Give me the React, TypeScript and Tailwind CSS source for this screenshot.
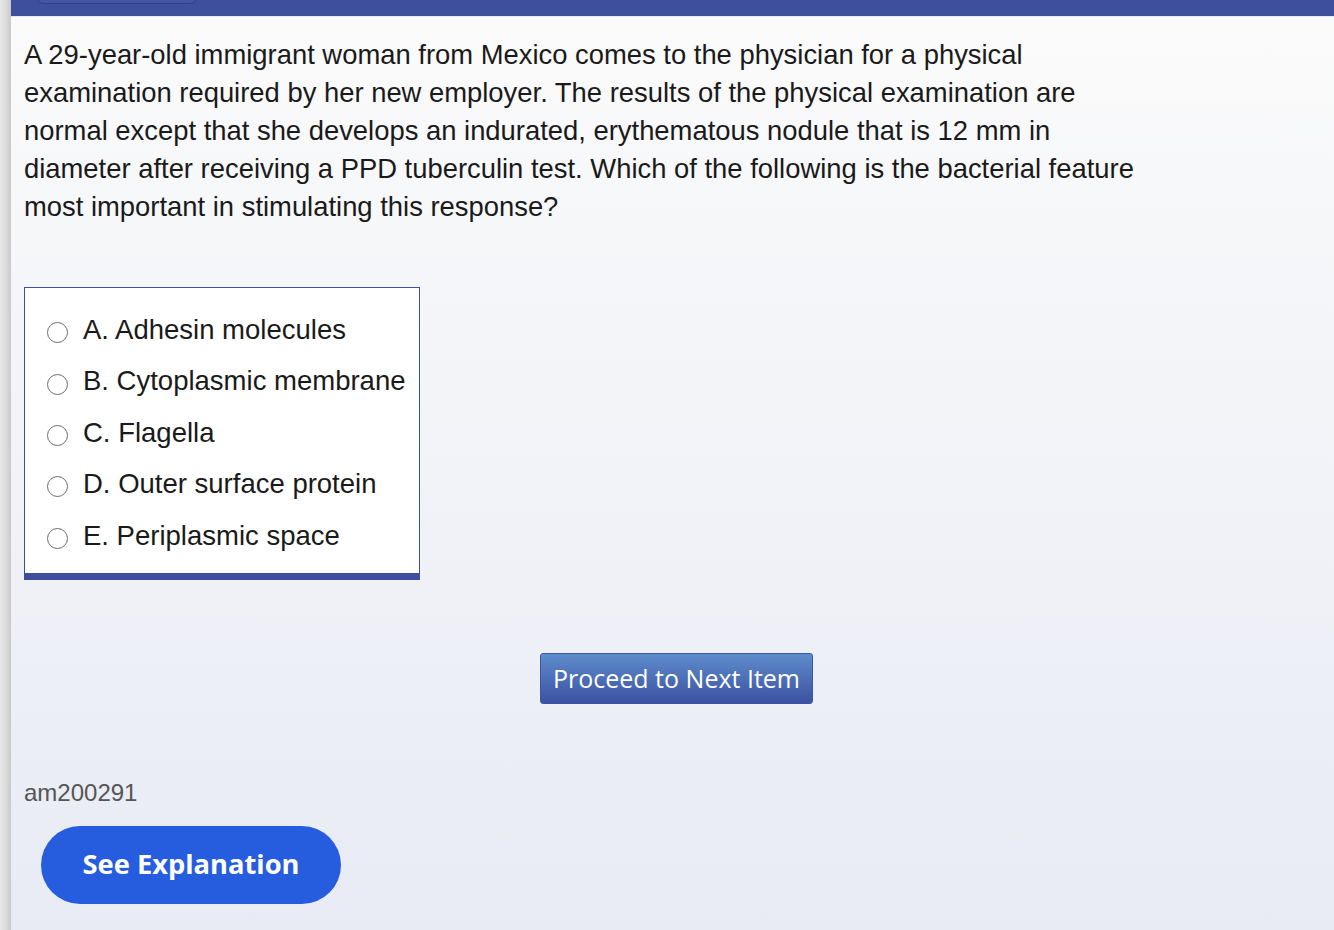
import React from "react";

const options = [
  "A. Adhesin molecules",
  "B. Cytoplasmic membrane",
  "C. Flagella",
  "D. Outer surface protein",
  "E. Periplasmic space",
];

export default function App() {
  return (
    <div className="flex h-[930px] w-[1334px] overflow-hidden bg-white" style={{ fontFamily: '"Liberation Sans", Arial, sans-serif' }}>
      <div className="h-full w-[11px] shrink-0 bg-gradient-to-r from-[#e6e6e6] via-[#dcdcdc] to-[#c9c9c9]" />
      <div className="flex h-full flex-1 flex-col bg-gradient-to-b from-[#fbfbfb] to-[#e8ebf4]">
        <div className="flex h-[17px] shrink-0 items-end justify-between overflow-hidden border-b border-[#e4e7ef] bg-[#3e4f9e] pb-[12px]">
          <div className="ml-[25px] flex h-[34px] w-[162px] shrink-0 items-center justify-center rounded-[8px] border border-[#2f3f88] bg-[#4255a6] text-[22px] text-white">
            Block: 1 of 1
          </div>
          <div className="mr-[-40px] flex h-[30px] items-center text-[22px] text-white" style={{ fontFamily: '"Open Sans", sans-serif' }}>
            Previous
          </div>
        </div>
        <div className="flex flex-1 flex-col pl-[13px]">
          <p className="mt-[19px] w-[1200px] text-[27.4px] leading-[38px] text-[#1a1a1a]">
            A 29-year-old immigrant woman from Mexico comes to the physician for a physical
            <br />
            examination required by her new employer. The results of the physical examination are
            <br />
            normal except that she develops an indurated, erythematous nodule that is 12 mm in
            <br />
            diameter after receiving a PPD tuberculin test. Which of the following is the bacterial feature
            <br />
            most important in stimulating this response?
          </p>
          <div className="mt-[61px] w-[396px] border border-b-[7px] border-[#3e4f9e] bg-white pb-[12px] pt-[16px]">
            {options.map((o) => (
              <div key={o} className="flex h-[51.4px] items-center">
                <div className="ml-[22px] mt-[6px] h-[21px] w-[21px] rounded-full border-[1.5px] border-[#6b6b6b] bg-white" />
                <span className="ml-[15px] text-[27.5px] text-[#1a1a1a]">{o}</span>
              </div>
            ))}
          </div>
          <div className="mt-[73px] flex">
            <button
              className="ml-[516px] flex h-[51px] w-[273px] items-center justify-center rounded-[3px] border border-[#3a55a8] bg-gradient-to-b from-[#5e8ccb] to-[#3d52a2] text-[25px] text-white"
              style={{ fontFamily: '"Open Sans", sans-serif' }}
            >
              Proceed to Next Item
            </button>
          </div>
          <div className="mt-[71px] text-[24px] text-[#555555]">am200291</div>
          <div className="mt-[15px] pl-[17px]">
            <button
              className="flex h-[78px] w-[300px] items-center justify-center rounded-full bg-[#265ddf] text-[27.3px] font-bold text-white"
              style={{ fontFamily: '"Open Sans", sans-serif' }}
            >
              See Explanation
            </button>
          </div>
        </div>
      </div>
    </div>
  );
}
